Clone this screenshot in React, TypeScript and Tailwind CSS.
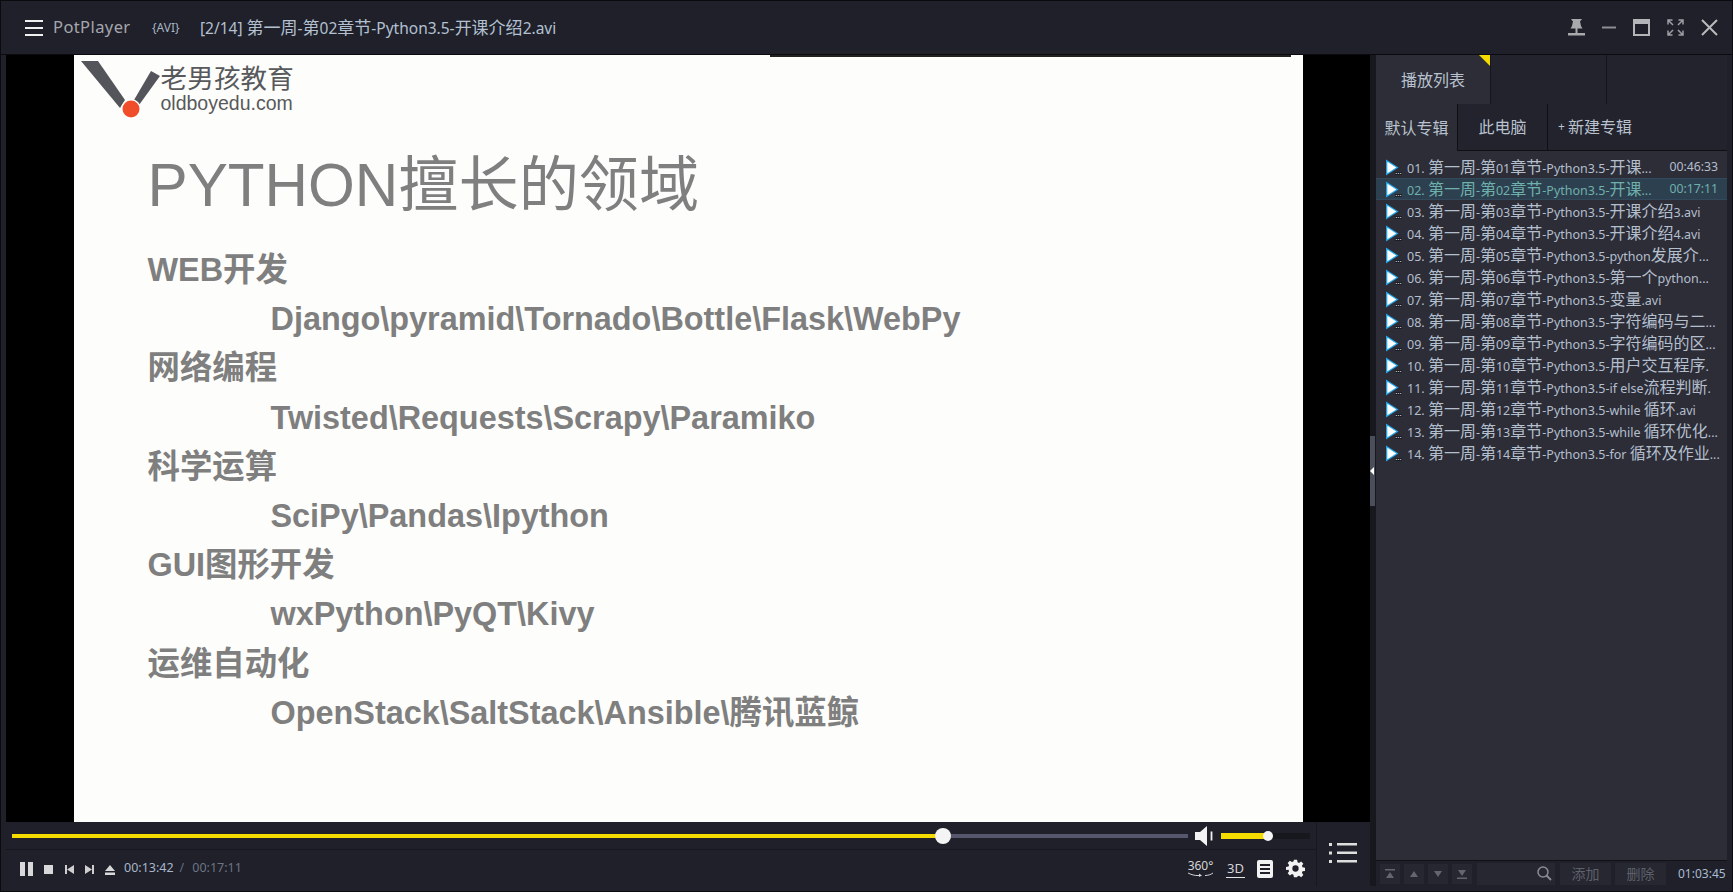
import React from 'react';

const ui = { fontFamily: '"Noto Sans", "Noto Sans CJK SC", sans-serif' };
const slideFont = { fontFamily: '"Liberation Sans", "Noto Sans CJK SC", sans-serif' };

const tracks = [
  { n: '01', rest: '开课...', time: '00:46:33' },
  { n: '02', rest: '开课...', time: '00:17:11', active: true },
  { n: '03', rest: '开课介绍3.avi' },
  { n: '04', rest: '开课介绍4.avi' },
  { n: '05', rest: 'python发展介...' },
  { n: '06', rest: '第一个python...' },
  { n: '07', rest: '变量.avi' },
  { n: '08', rest: '字符编码与二...' },
  { n: '09', rest: '字符编码的区...' },
  { n: '10', rest: '用户交互程序.' },
  { n: '11', rest: 'if else流程判断.' },
  { n: '12', rest: 'while 循环.avi' },
  { n: '13', rest: 'while 循环优化...' },
  { n: '14', rest: 'for 循环及作业...' },
];

const slideItems = [
  { head: 'WEB开发', sub: 'Django\\pyramid\\Tornado\\Bottle\\Flask\\WebPy' },
  { head: '网络编程', sub: 'Twisted\\Requests\\Scrapy\\Paramiko' },
  { head: '科学运算', sub: 'SciPy\\Pandas\\Ipython' },
  { head: 'GUI图形开发', sub: 'wxPython\\PyQT\\Kivy' },
  { head: '运维自动化', sub: 'OpenStack\\SaltStack\\Ansible\\腾讯蓝鲸' },
];

// latin runs are set smaller than the CJK ones, like the player's skin font
function Mixed({ text, cjk, latin }: { text: string; cjk: string; latin: string }) {
  const parts = text.match(/[\u4e00-\u9fff]+|[^\u4e00-\u9fff]+/g) || [];
  return (
    <>
      {parts.map((p, i) => (
        <span key={i} className={/[\u4e00-\u9fff]/.test(p) ? cjk : latin}>
          {p}
        </span>
      ))}
    </>
  );
}

function FileIcon() {
  return (
    <svg width="17" height="17" viewBox="0 0 17 17" className="shrink-0">
      <path d="M1 0.500 L13.500 8.500 L1 16.500 Z" fill="#25a5e8" />
      <path d="M2.300 2.700 L11.300 8.500 L2.300 14.300 Z" fill="#ffffff" />
      <rect x="10" y="13" width="7" height="3" fill="#1d1e25" />
      <path d="M10.700 14.500h1.500M13 14.500h1.200M15 14.500h1.300" stroke="#aab0b8" strokeWidth="1.200" />
    </svg>
  );
}

function TitleBar() {
  return (
    <div className="h-[53px] shrink-0 flex items-center pl-[24px] pr-[14px] bg-[#1f2029]" style={ui}>
      <svg width="18" height="18" viewBox="0 0 18 18">
        <path d="M0 2h18M0 9h18M0 16h18" stroke="#f0f0f0" strokeWidth="2" />
      </svg>
      <span className="ml-[10px] w-[99px] text-[16.500px] tracking-[0.4px] text-[#a5a7ad]">PotPlayer</span>
      <span className="w-[48px] text-[12px] text-[#a9b4c4]">{'{AVI}'}</span>
      <span className="text-[#b3c0d2] whitespace-nowrap">
        <Mixed text="[2/14] 第一周-第02章节-Python3.5-开课介绍2.avi" cjk="text-[17px]" latin="text-[15.500px]" />
      </span>
      <div className="ml-auto flex items-center gap-[17px]">
        <svg width="17" height="17" viewBox="0 0 17 17">
          <path d="M3 0h11l-1.500 2H12l1 5 1.500 2.500h-12L4 7l1-5H4.500zM7.500 9.500h2V14h-2zM0 14h17v2.500H0z" fill="#a8a9ac" />
        </svg>
        <svg width="14" height="17" viewBox="0 0 14 17">
          <path d="M0 8.500h14" stroke="#8e8f94" strokeWidth="2" />
        </svg>
        <svg width="17" height="17" viewBox="0 0 17 17">
          <path d="M1 1h15v15H1z" fill="none" stroke="#b4b5b8" strokeWidth="2" />
          <path d="M1 1h15v4H1z" fill="#b4b5b8" />
        </svg>
        <svg width="17" height="17" viewBox="0 0 17 17">
          <path d="M1 5.500V1h4.500M1 1l5 5M16 5.500V1h-4.500M16 1l-5 5M1 11.500V16h4.500M1 16l5-5M16 11.500V16h-4.500M16 16l-5-5" fill="none" stroke="#9d9ea3" strokeWidth="1.500" />
        </svg>
        <svg width="17" height="17" viewBox="0 0 17 17">
          <path d="M1 1l15 15M16 1L1 16" stroke="#b9babd" strokeWidth="2" />
        </svg>
      </div>
    </div>
  );
}

function Logo() {
  return (
    <div className="flex items-start h-[64px] pl-[7px] pt-[6px]">
      <svg width="90" height="58" viewBox="0 0 90 58" className="shrink-0">
        <path d="M0 0h17l27 39-5 8z" fill="#54555a" />
        <path d="M70 10l9 5-21 29-5-5z" fill="#54555a" />
        <circle cx="50" cy="48" r="10" fill="#ffffff" />
        <circle cx="50" cy="48" r="8.500" fill="#f04e2b" />
      </svg>
      <div className="ml-[-10px] mt-[5px] text-[#58595c] leading-none" style={slideFont}>
        <div className="text-[26.500px] tracking-[0.2px]">老男孩教育</div>
        <div className="mt-[1px] text-[19.500px]">oldboyedu.com</div>
      </div>
    </div>
  );
}

function Slide() {
  return (
    <div className="w-[1229px] h-full bg-[#fdfdfb] relative overflow-hidden" style={slideFont}>
      <div className="absolute top-0 left-[696px] w-[521px] h-[2px] bg-[#222]" />
      <Logo />
      <div className="pl-[74px] pt-[31px] text-[#7f7f7f]">
        <div className="text-[60.200px] leading-[72px] mb-[24px]">PYTHON擅长的领域</div>
        {slideItems.map((item) => (
          <div key={item.head} className="text-[32.400px] font-bold leading-[49.200px]">
            <div>{item.head}</div>
            <div className="pl-[123px]">{item.sub}</div>
          </div>
        ))}
      </div>
    </div>
  );
}

function Controls() {
  return (
    <div className="h-[64px] shrink-0 flex bg-[#1f2029]" style={ui}>
      <div className="flex-1 flex flex-col">
        <div className="h-[28px] flex items-center pl-[6px] pr-[6px] border-b border-[#17181f]">
          <div className="relative w-[931px] h-[4px] bg-[#f5dc00] shrink-0">
            <div className="absolute right-[-8px] top-[-6px] w-[16px] h-[16px] rounded-full bg-[#f4f4f4]" />
          </div>
          <div className="w-[245px] h-[4px] bg-[#56566c] shrink-0" />
          <svg width="19" height="20" viewBox="0 0 19 20" className="ml-[7px] shrink-0">
            <path d="M0 6h5l7-6v20l-7-6H0z" fill="#f2f2f2" />
            <path d="M16.500 5.500v9" stroke="#f2f2f2" strokeWidth="1.800" />
          </svg>
          <div className="ml-[7px] relative w-[89px] h-[6px] bg-[#17181e] shrink-0">
            <div className="absolute left-0 top-0 h-full w-[47px] bg-[#f5dc00]" />
            <div className="absolute left-[42px] top-[-2px] w-[10px] h-[10px] rounded-full bg-[#f4f4f4]" />
          </div>
        </div>
        <div className="flex-1 flex items-center pl-[14px] pr-[11px] pt-[1px]">
          <svg width="100" height="16" viewBox="0 0 100 16" className="shrink-0">
            <path d="M0 1h5v14H0zM8 1h5v14H8z" fill="#d8d8da" />
            <path d="M24 4h9v9h-9z" fill="#d8d8da" />
            <path d="M45 4h2v9h-2zM47 8.500L54 4v9z" fill="#cfcfd2" />
            <path d="M65 4l7 4.500L65 13zM72 4h2v9h-2z" fill="#cfcfd2" />
            <path d="M85 10l5-6 5 6zM85 11.500h10V14H85z" fill="#d8d8da" />
          </svg>
          <span className="ml-[4px] text-[12.500px] text-[#a8b6ca]">00:13:42</span>
          <span className="ml-[6px] text-[12.500px] text-[#5f6f86]">/</span>
          <span className="ml-[8px] text-[12.500px] text-[#6c7584]">00:17:11</span>
          <div className="ml-auto flex items-center">
            <div className="flex flex-col items-center w-[25px] leading-none">
              <span className="text-[12px] text-[#d5d5d7]">360°</span>
              <svg width="25" height="5" viewBox="0 0 25 5">
                <path d="M0 1c4 2 7 2.500 9 2.500h3M17 3.500c3 0 6-1 8-2.500" stroke="#d5d5d7" fill="none" />
                <path d="M11 1.500l3 2-3 1.500z" fill="#d5d5d7" />
              </svg>
            </div>
            <div className="ml-[13px] w-[19px] text-center border-b border-[#e5e5e5] text-[13px] leading-[17px] text-[#d5d5d7]">3D</div>
            <svg width="16" height="18" viewBox="0 0 16 18" className="ml-[12px]">
              <path fillRule="evenodd" d="M2 0h12a2 2 0 012 2v14a2 2 0 01-2 2H2a2 2 0 01-2-2V2a2 2 0 012-2zm1 4v2h10V4zm0 4v2h10V8zm0 4v2h10v-2z" fill="#f2f2f2" />
            </svg>
            <svg width="19" height="19" viewBox="0 0 24 24" className="ml-[13px]">
              <path fillRule="evenodd" d="M10 1h4l.6 3.100 1.900.8 2.600-1.800 2.800 2.800-1.800 2.600.8 1.900 3.100.6v4l-3.100.6-.8 1.900 1.800 2.600-2.800 2.800-2.600-1.800-1.900.8L14 23h-4l-.6-3.100-1.900-.8-2.600 1.800-2.800-2.800 1.800-2.600-.8-1.900L0 14v-4l3.100-.6.8-1.900L2.100 4.900l2.800-2.800 2.600 1.800 1.900-.8zM12 8a4 4 0 100 8 4 4 0 000-8z" fill="#f2f2f2" />
            </svg>
          </div>
        </div>
      </div>
      <div className="w-[55px] shrink-0 border-l border-[#17181f] flex items-center justify-center pr-[2px] pb-[2px]">
        <svg width="28" height="22" viewBox="0 0 28 22">
          <path d="M0 1h3v3H0zM0 9.500h3v3H0zM0 18h3v3H0zM8 1h20v2.600H8zM8 9.500h20v2.600H8zM8 18h20v2.600H8z" fill="#dedede" />
        </svg>
      </div>
    </div>
  );
}

function Splitter() {
  return (
    <div className="w-[6px] shrink-0 bg-[#17181e] relative">
      <div className="absolute left-0 top-[381px] w-[5px] h-[70px] bg-[#4b4e5b]" />
      <div className="absolute left-0 top-[412px] w-0 h-0 border-y-[4px] border-y-transparent border-r-[4px] border-r-white" />
    </div>
  );
}

function Playlist() {
  return (
    <div className="w-[351px] shrink-0 flex flex-col bg-[#2c2d37]" style={ui}>
      <div className="h-[49px] flex shrink-0 text-[16px] text-[#b9c2cf]">
        <div className="w-[115px] relative flex items-center justify-center border-r border-[#15161b]">
          播放列表
          <div className="absolute top-0 right-0 w-0 h-0 border-t-[11px] border-t-[#f5dc00] border-l-[11px] border-l-transparent" />
        </div>
        <div className="w-[116px] bg-[#22232c] border-r border-[#15161b]" />
        <div className="flex-1 bg-[#22232c]" />
      </div>
      <div className="h-[47px] flex shrink-0 text-[16px] text-[#b9c2cf]">
        <div className="w-[81px] flex items-center justify-center">默认专辑</div>
        <div className="w-[90px] flex items-center justify-center bg-[#22232c] border-l border-b border-[#0f1014]">此电脑</div>
        <div className="flex-1 flex items-center pl-[10px] gap-[3px] bg-[#22232c] border-l border-b border-[#0f1014]">
          <span className="text-[12px]">+</span> 新建专辑
        </div>
      </div>
      <div className="flex-1 pt-[5px]">
        {tracks.map((t) => (
          <div
            key={t.n}
            className={`h-[22px] flex items-center pl-[9px] pr-[9px] border-y whitespace-nowrap ${
              t.active ? 'bg-[#2d4050] border-[#33495c] text-[#6fb0ac]' : 'border-transparent text-[#b4bfce]'
            }`}
          >
            <FileIcon />
            <span className="ml-[5px]">
              <Mixed text={`${t.n}. 第一周-第${t.n}章节-Python3.5-${t.rest}`} cjk="text-[16px]" latin="text-[12.500px]" />
            </span>
            {t.time && <span className="ml-auto text-[12.250px]">{t.time}</span>}
          </div>
        ))}
      </div>
      <div className="h-[26px] shrink-0 flex items-center pl-[4px] bg-[#1f2029] border-t border-[#111216] text-[#5e606a]">
        {['M1 1h10v1.500H1zM6 4l4 6H2z', 'M6 3l4 6H2z', 'M2 3h8L6 9z', 'M6 8L2 2h8zM1 9.500h10V11H1z'].map((d, i) => (
          <div key={i} className="w-[20px] h-[20px] mr-[4px] bg-[#262730] flex items-center justify-center shrink-0">
            <svg width="12" height="12" viewBox="0 0 12 12">
              <path d={d} fill="#63656f" />
            </svg>
          </div>
        ))}
        <div className="w-[78px] h-[22px] ml-[1px] bg-[#262730] flex items-center justify-end pr-[3px] shrink-0">
          <svg width="15" height="15" viewBox="0 0 15 15">
            <circle cx="6" cy="6" r="5" stroke="#8b8d95" strokeWidth="1.500" fill="none" />
            <path d="M9.500 9.500L14 14" stroke="#8b8d95" strokeWidth="1.800" />
          </svg>
        </div>
        <div className="w-[51px] h-[22px] ml-[5px] bg-[#262730] flex items-center justify-center text-[14px] shrink-0">添加</div>
        <div className="w-[51px] h-[22px] ml-[4px] bg-[#262730] flex items-center justify-center text-[14px] shrink-0">删除</div>
        <span className="ml-[12px] text-[12px] text-[#a9bcd2]">01:03:45</span>
      </div>
    </div>
  );
}

export default function App() {
  return (
    <div className="w-[1733px] h-[892px] p-[1px] bg-[#0b0b0f] overflow-hidden">
      <div className="h-full flex flex-col bg-[#1f2029]">
        <TitleBar />
        <div className="flex-1 min-h-0 flex pl-[5px] pr-[5px] pb-[5px] border-t border-[#0b0b0f]">
          <div className="w-[1364px] shrink-0 flex flex-col">
            <div className="flex-1 min-h-0 bg-black flex justify-center">
              <Slide />
            </div>
            <Controls />
          </div>
          <Splitter />
          <Playlist />
        </div>
      </div>
    </div>
  );
}
